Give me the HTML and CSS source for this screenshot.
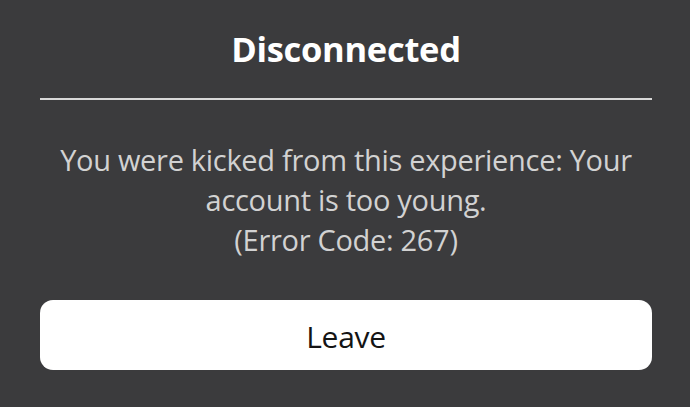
FILE: index.html
```html
<!DOCTYPE html>
<html>
<head>
<meta charset="utf-8">
<link rel="stylesheet" href="styles.css">
</head>
<body>
<div class="dialog">
  <h1 class="title">Disconnected</h1>
  <div class="divider"></div>
  <p class="message">You were kicked from this experience: Your<br>account is too young.<br>(Error Code: 267)</p>
  <button class="leave">Leave</button>
</div>
</body>
</html>
```
FILE: styles.css
```css
html, body {
  margin: 0;
  padding: 0;
  background: #3b3b3d;
  width: 690px;
  height: 407px;
  overflow: hidden;
}
.dialog {
  display: flex;
  flex-direction: column;
  padding: 22px 38px 0 40px;
  font-family: "Open Sans", "Noto Sans", sans-serif;
}
.title {
  margin: 0;
  height: 54px;
  text-align: center;
  color: #ffffff;
  font-size: 34.5px;
  font-weight: 700;
  line-height: 54px;
  letter-spacing: -0.3px;
}
.divider {
  margin-top: 22px;
  height: 2px;
  background: #d8d8d8;
}
.message {
  margin: 40px 0 0 0;
  text-align: center;
  color: #d2d2d2;
  font-size: 29px;
  line-height: 40px;
  letter-spacing: -0.3px;
}
.leave {
  margin-top: 40px;
  height: 70px;
  border: none;
  border-radius: 13px;
  background: #ffffff;
  color: #141414;
  font-family: inherit;
  font-size: 30px;
  letter-spacing: -0.3px;
  padding: 2px 0 0 0;
}
```
